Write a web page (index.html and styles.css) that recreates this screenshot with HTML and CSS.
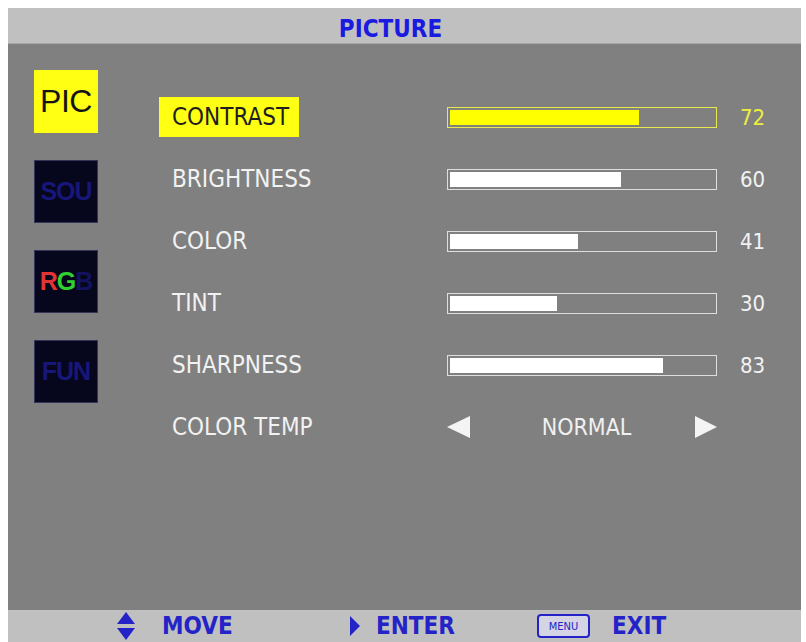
FILE: index.html
```html
<!DOCTYPE html>
<html>
<head>
<meta charset="utf-8">
<link rel="stylesheet" href="styles.css">
</head>
<body>
<div class="frame">
  <div class="header">PICTURE</div>
  <div class="main">
    <div class="tabs">
      <div class="tab tab-pic">PIC</div>
      <div class="tab tab-dark tab-sou">SOU</div>
      <div class="tab tab-dark tab-rgb"><span class="r">R</span><span class="g">G</span><span class="b">B</span></div>
      <div class="tab tab-dark tab-fun">FUN</div>
    </div>
    <div class="menu">
      <div class="row selected">
        <div class="label">CONTRAST</div>
        <div class="bar"><div class="fill" style="width:71.6%"></div></div>
        <div class="value">72</div>
      </div>
      <div class="row">
        <div class="label">BRIGHTNESS</div>
        <div class="bar"><div class="fill" style="width:64.8%"></div></div>
        <div class="value">60</div>
      </div>
      <div class="row">
        <div class="label">COLOR</div>
        <div class="bar"><div class="fill" style="width:48.5%"></div></div>
        <div class="value">41</div>
      </div>
      <div class="row">
        <div class="label">TINT</div>
        <div class="bar"><div class="fill" style="width:40.5%"></div></div>
        <div class="value">30</div>
      </div>
      <div class="row">
        <div class="label">SHARPNESS</div>
        <div class="bar"><div class="fill" style="width:80.7%"></div></div>
        <div class="value">83</div>
      </div>
      <div class="row">
        <div class="label">COLOR TEMP</div>
        <div class="select">
          <svg class="arrow" width="23" height="22" viewBox="0 0 23 22"><polygon points="0,11 23,0 23,22" fill="#f4f4f4"/></svg>
          <span class="select-text">NORMAL</span>
          <svg class="arrow" width="22" height="22" viewBox="0 0 22 22"><polygon points="0,0 22,11 0,22" fill="#f4f4f4"/></svg>
        </div>
      </div>
    </div>
  </div>
  <div class="footer">
    <div class="hint hint-move">
      <svg width="18" height="28" viewBox="0 0 18 28"><polygon points="9,0 18,12 0,12" fill="#2323c8"/><polygon points="0,16 18,16 9,28" fill="#2323c8"/></svg>
      <span>MOVE</span>
    </div>
    <div class="hint hint-enter">
      <svg width="10" height="20" viewBox="0 0 10 20"><polygon points="0,0 10,10 0,20" fill="#2323c8"/></svg>
      <span>ENTER</span>
    </div>
    <div class="hint hint-exit">
      <span class="menu-key">MENU</span>
      <span>EXIT</span>
    </div>
  </div>
</div>
</body>
</html>
```
FILE: styles.css
```css
html, body {
  margin: 0;
  padding: 0;
  background: #ffffff;
}

body {
  width: 806px;
  height: 642px;
  overflow: hidden;
}

.frame {
  margin: 8px 5px 0 8px;
  width: 793px;
  height: 634px;
  display: flex;
  flex-direction: column;
  font-family: "DejaVu Sans Condensed", "DejaVu Sans", sans-serif;
  font-stretch: condensed;
}

.header {
  height: 36px;
  background: #c0c0c0;
  color: #1a1ae0;
  font-weight: bold;
  font-size: 24px;
  display: flex;
  align-items: center;
  justify-content: center;
  padding-right: 28px;
  padding-top: 6px;
  border-bottom: 1px solid #a8a8a8;
  box-sizing: border-box;
}

.main {
  flex: 1;
  background: #808080;
  display: flex;
}

.tabs {
  width: 151px;
  box-sizing: border-box;
  padding: 26px 0 0 26px;
  display: flex;
  flex-direction: column;
  gap: 27px;
}

.tab {
  width: 64px;
  height: 63px;
  box-sizing: border-box;
  display: flex;
  align-items: center;
  justify-content: center;
  font-family: "Liberation Sans", Arial, sans-serif;
  font-size: 32px;
  letter-spacing: -0.5px;
}

.tab-pic {
  background: #ffff14;
  color: #151515;
}

.tab-dark {
  background: #06061c;
  border: 1px solid #34345a;
  color: #17177a;
  font-weight: bold;
  font-size: 25px;
  letter-spacing: -1px;
  overflow: hidden;
}

.tab-rgb .r { color: #e03434; }
.tab-rgb .g { color: #30d030; }
.tab-rgb .b { color: #12125e; }

.menu {
  padding-top: 42px;
  display: flex;
  flex-direction: column;
}

.row {
  height: 62px;
  display: grid;
  grid-template-columns: 288px 270px auto;
  align-items: center;
}

.label {
  justify-self: start;
  height: 40px;
  width: 140px;
  box-sizing: border-box;
  padding-left: 13px;
  display: flex;
  align-items: center;
  font-size: 24px;
  color: #f2f2f2;
  white-space: nowrap;
}

.selected .label {
  background: #ffff14;
  color: #1e1e1e;
}

.bar {
  height: 21px;
  box-sizing: border-box;
  border: 1px solid #dedede;
  padding: 2px;
}

.selected .bar {
  border-color: #e8e850;
}

.fill {
  height: 100%;
  background: #ffffff;
}

.selected .fill {
  background: #ffff00;
}

.value {
  padding-left: 23px;
  font-size: 22px;
  color: #f2f2f2;
}

.selected .value {
  color: #eeee40;
}

.select {
  display: flex;
  align-items: center;
  justify-content: space-between;
  height: 30px;
}

.arrow {
  display: block;
}

.select-text {
  font-size: 23px;
  color: #f0f0f0;
  margin-left: 8px;
}

.footer {
  height: 32px;
  background: #c0c0c0;
  display: flex;
  align-items: center;
  padding-left: 109px;
  color: #2323c8;
  font-weight: bold;
  font-size: 24px;
}

.hint {
  display: flex;
  align-items: center;
}

.hint svg {
  display: block;
}

.hint-move {
  width: 233px;
  gap: 27px;
}

.hint-enter {
  width: 187px;
  gap: 16px;
}

.hint-exit {
  gap: 22px;
}

.menu-key {
  width: 53px;
  height: 24px;
  box-sizing: border-box;
  border: 2px solid #2323c8;
  border-radius: 4px;
  font-size: 11px;
  font-weight: normal;
  display: flex;
  align-items: center;
  justify-content: center;
  background: #d4d4e4;
}
```
